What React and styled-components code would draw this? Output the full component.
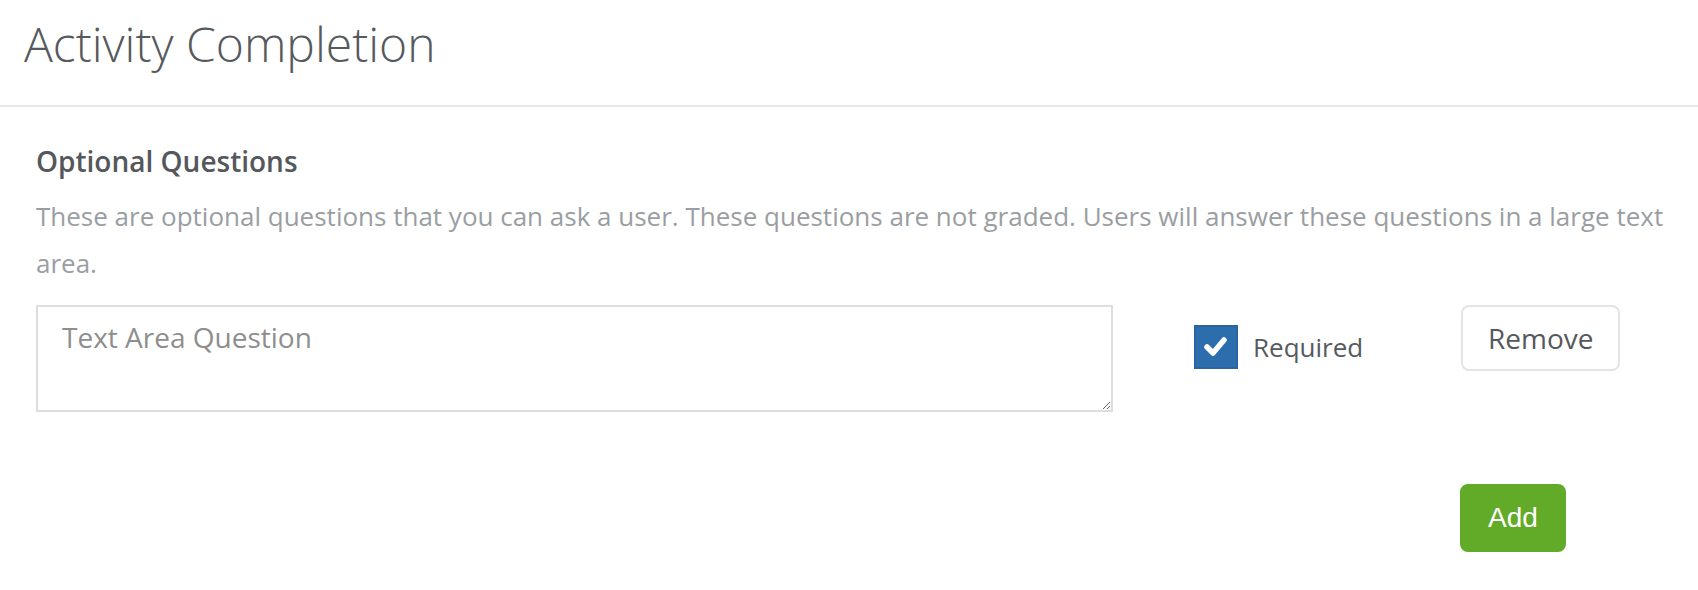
import React from "react";
import styled, { createGlobalStyle } from "styled-components";

const GlobalStyle = createGlobalStyle`
  html, body {
    margin: 0;
    padding: 0;
    background: #ffffff;
  }
  body {
    font-family: "Open Sans", "Noto Sans", Arial, sans-serif;
    font-size: 28px;
    line-height: 40px;
    color: #555a5e;
  }
  * { box-sizing: border-box; }
`;

const Page = styled.div`
  width: 1698px;
  min-height: 590px;
  background: #fff;
`;

const Header = styled.header`
  padding: 17px 24px 35px;
  border-bottom: 2px solid #e6e9ec;
`;

const Title = styled.h1`
  margin: 0;
  font-family: "Open Sans", sans-serif;
  font-weight: 300;
  font-size: 48px;
  line-height: 53px;
  color: #56595d;
`;

const Section = styled.section`
  padding: 34px 30px 0 36px;
`;

const SectionTitle = styled.h2`
  margin: 0;
  font-size: 28px;
  line-height: 40px;
  font-weight: 600;
  color: #54585c;
`;

const Description = styled.p`
  margin: 12px 0 0;
  font-size: 26px;
  line-height: 47px;
  color: #9a9ea2;
`;

const QuestionRow = styled.div`
  display: grid;
  grid-template-columns: 1077px 186px auto;
  column-gap: 81px;
  align-items: start;
  margin-top: 18px;
`;

const TextArea = styled.textarea`
  display: block;
  width: 1077px;
  height: 107px;
  padding: 10px 24px;
  border: 2px solid #dedede;
  border-radius: 0;
  font-family: "Open Sans", sans-serif;
  font-size: 28px;
  line-height: 40px;
  color: #555;
  resize: vertical;
  outline: none;
  &::placeholder {
    color: #8e8e8e;
  }
`;

const CheckLabel = styled.label`
  display: flex;
  align-items: center;
  gap: 15px;
  margin-top: 20px;
  font-size: 26px;
  line-height: 40px;
  color: #555a5e;
  white-space: nowrap;
`;

const CheckBox = styled.span`
  display: inline-flex;
  width: 44px;
  height: 44px;
  background: ${(p) => (p.$checked ? "#2c6dad" : "#fff")};
  border: 2px solid ${(p) => (p.$checked ? "#2a65a2" : "#ccc")};
`;

const CheckWrap = styled.span`
  position: relative;
  display: inline-flex;
  width: 44px;
  height: 44px;
  flex-shrink: 0;
`;

const Button = styled.button`
  display: inline-block;
  border-radius: 8px;
  cursor: pointer;
  font-size: 28px;
  line-height: 40px;
  white-space: nowrap;
`;

const DefaultButton = styled(Button)`
  padding: 11px 25px;
  border: 2px solid #e2e5e8;
  background: #fff;
  color: #55595d;
  font-family: "Open Sans", sans-serif;
`;

const SuccessButton = styled(Button)`
  padding: 12px 26px;
  border: 2px solid #62ab28;
  background: #62ab28;
  color: #fff;
  font-family: "Liberation Sans", Arial, sans-serif;
`;

const ActionRow = styled.div`
  display: grid;
  grid-template-columns: 1077px 185px auto;
  column-gap: 81px;
  margin-top: 72px;
`;

const ActionCell = styled.div`
  grid-column: 3;
`;

const CheckMark = styled.svg`
  position: absolute;
  inset: 0;
`;

function CheckIcon() {
  return (
    <CheckMark width="44" height="44" viewBox="0 0 44 44">
      <polyline
        points="13,22 19,28 30,15"
        fill="none"
        stroke="#fff"
        strokeWidth="5.5"
        strokeLinecap="round"
        strokeLinejoin="round"
      />
    </CheckMark>
  );
}

export default function App() {
  return (
    <Page>
      <GlobalStyle />
      <Header>
        <Title>Activity Completion</Title>
      </Header>
      <Section>
        <SectionTitle>Optional Questions</SectionTitle>
        <Description>
          These are optional questions that you can ask a user. These questions are not graded. Users will
          answer these questions in a large text area.
        </Description>
        <QuestionRow>
          <TextArea placeholder="Text Area Question" />
          <CheckLabel>
            <CheckWrap>
              <CheckBox $checked />
              <CheckIcon />
            </CheckWrap>
            Required
          </CheckLabel>
          <div>
            <DefaultButton type="button">Remove</DefaultButton>
          </div>
        </QuestionRow>
        <ActionRow>
          <ActionCell>
            <SuccessButton type="button">Add</SuccessButton>
          </ActionCell>
        </ActionRow>
      </Section>
    </Page>
  );
}
